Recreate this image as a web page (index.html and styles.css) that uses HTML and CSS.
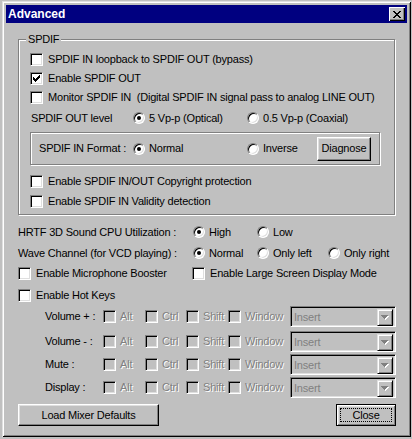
FILE: index.html
```html
<!DOCTYPE html>
<html>
<head>
<meta charset="utf-8">
<title>Advanced</title>
<link rel="stylesheet" href="styles.css">
</head>
<body>
<div class="window">
  <div class="titlebar">
    <span class="title">Advanced</span>
    <span class="tb-close"><svg width="8" height="7" viewBox="0 0 8 7" shape-rendering="crispEdges"><path d="M0 0h2v1h-2zM6 0h2v1h-2zM1 1h2v1h-2zM5 1h2v1h-2zM2 2h4v1h-4zM3 3h2v1h-2zM2 4h4v1h-4zM1 5h2v1h-2zM5 5h2v1h-2zM0 6h2v1h-2zM6 6h2v1h-2z" fill="#000"/></svg></span>
  </div>
  <div class="client">
    <div class="group">
      <div class="group-title">SPDIF</div>
      <div class="row r1"><span class="cb"></span><span>SPDIF IN loopback to SPDIF OUT (bypass)</span></div>
      <div class="row r2"><span class="cb"><svg width="7" height="7" viewBox="0 0 7 7" shape-rendering="crispEdges"><path d="M6 0h1v1h-1zM5 1h2v1h-2zM0 2h1v1h-1zM4 2h3v1h-3zM0 3h2v1h-2zM3 3h3v1h-3zM0 4h5v1h-5zM1 5h3v1h-3zM2 6h1v1h-1z" fill="#000"/></svg></span><span>Enable SPDIF OUT</span></div>
      <div class="row r3"><span class="cb"></span><span>Monitor SPDIF IN&nbsp; (Digital SPDIF IN signal pass to analog LINE OUT)</span></div>
      <div class="row r4">
        <span class="lbl lbl-level">SPDIF OUT level</span>
        <span class="opt w114"><span class="radio on"></span>5 Vp-p (Optical)</span>
        <span class="opt"><span class="radio"></span>0.5 Vp-p (Coaxial)</span>
      </div>
      <div class="inner">
        <span class="lbl lbl-format">SPDIF IN Format :</span>
        <span class="opt w114"><span class="radio on"></span>Normal</span>
        <span class="opt w70"><span class="radio"></span>Inverse</span>
        <span class="btn btn-diag">Diagnose</span>
      </div>
      <div class="row r5"><span class="cb"></span><span>Enable SPDIF IN/OUT Copyright protection</span></div>
      <div class="row r6"><span class="cb"></span><span>Enable SPDIF IN Validity detection</span></div>
    </div>

    <div class="row out hrtf">
      <span class="lbl lbl-out">HRTF 3D Sound CPU Utilization :</span>
      <span class="opt w64"><span class="radio on"></span>High</span>
      <span class="opt"><span class="radio"></span>Low</span>
    </div>
    <div class="row out wave">
      <span class="lbl lbl-out">Wave Channel (for VCD playing) :</span>
      <span class="opt w64"><span class="radio on"></span>Normal</span>
      <span class="opt w71"><span class="radio"></span>Only left</span>
      <span class="opt"><span class="radio"></span>Only right</span>
    </div>
    <div class="row out mic">
      <span class="opt w174"><span class="cb"></span>Enable Microphone Booster</span>
      <span class="opt"><span class="cb"></span>Enable Large Screen Display Mode</span>
    </div>
    <div class="row out hot">
      <span class="opt"><span class="cb"></span>Enable Hot Keys</span>
    </div>

    <div class="hk hk1">
      <span class="hk-lbl">Volume + :</span>
      <span class="hk-opt w42"><span class="cb dis"></span><span class="dtext">Alt</span></span>
      <span class="hk-opt w41"><span class="cb dis"></span><span class="dtext">Ctrl</span></span>
      <span class="hk-opt w42"><span class="cb dis"></span><span class="dtext">Shift</span></span>
      <span class="hk-opt w62"><span class="cb dis"></span><span class="dtext">Window</span></span>
      <span class="combo"><span class="combo-text">Insert</span><span class="combo-btn"><svg width="8" height="5" viewBox="0 0 8 5" shape-rendering="crispEdges"><path d="M1 1h7v1h-7zM2 2h5v1h-5zM3 3h3v1h-3zM4 4h1v1h-1z" fill="#fff"/><path d="M0 0h7v1h-7zM1 1h5v1h-5zM2 2h3v1h-3zM3 3h1v1h-1z" fill="#808080"/></svg></span></span>
    </div>
    <div class="hk hk2">
      <span class="hk-lbl">Volume - :</span>
      <span class="hk-opt w42"><span class="cb dis"></span><span class="dtext">Alt</span></span>
      <span class="hk-opt w41"><span class="cb dis"></span><span class="dtext">Ctrl</span></span>
      <span class="hk-opt w42"><span class="cb dis"></span><span class="dtext">Shift</span></span>
      <span class="hk-opt w62"><span class="cb dis"></span><span class="dtext">Window</span></span>
      <span class="combo"><span class="combo-text">Insert</span><span class="combo-btn"><svg width="8" height="5" viewBox="0 0 8 5" shape-rendering="crispEdges"><path d="M1 1h7v1h-7zM2 2h5v1h-5zM3 3h3v1h-3zM4 4h1v1h-1z" fill="#fff"/><path d="M0 0h7v1h-7zM1 1h5v1h-5zM2 2h3v1h-3zM3 3h1v1h-1z" fill="#808080"/></svg></span></span>
    </div>
    <div class="hk hk3">
      <span class="hk-lbl">Mute :</span>
      <span class="hk-opt w42"><span class="cb dis"></span><span class="dtext">Alt</span></span>
      <span class="hk-opt w41"><span class="cb dis"></span><span class="dtext">Ctrl</span></span>
      <span class="hk-opt w42"><span class="cb dis"></span><span class="dtext">Shift</span></span>
      <span class="hk-opt w62"><span class="cb dis"></span><span class="dtext">Window</span></span>
      <span class="combo"><span class="combo-text">Insert</span><span class="combo-btn"><svg width="8" height="5" viewBox="0 0 8 5" shape-rendering="crispEdges"><path d="M1 1h7v1h-7zM2 2h5v1h-5zM3 3h3v1h-3zM4 4h1v1h-1z" fill="#fff"/><path d="M0 0h7v1h-7zM1 1h5v1h-5zM2 2h3v1h-3zM3 3h1v1h-1z" fill="#808080"/></svg></span></span>
    </div>
    <div class="hk hk4">
      <span class="hk-lbl">Display :</span>
      <span class="hk-opt w42"><span class="cb dis"></span><span class="dtext">Alt</span></span>
      <span class="hk-opt w41"><span class="cb dis"></span><span class="dtext">Ctrl</span></span>
      <span class="hk-opt w42"><span class="cb dis"></span><span class="dtext">Shift</span></span>
      <span class="hk-opt w62"><span class="cb dis"></span><span class="dtext">Window</span></span>
      <span class="combo"><span class="combo-text">Insert</span><span class="combo-btn"><svg width="8" height="5" viewBox="0 0 8 5" shape-rendering="crispEdges"><path d="M1 1h7v1h-7zM2 2h5v1h-5zM3 3h3v1h-3zM4 4h1v1h-1z" fill="#fff"/><path d="M0 0h7v1h-7zM1 1h5v1h-5zM2 2h3v1h-3zM3 3h1v1h-1z" fill="#808080"/></svg></span></span>
    </div>

    <div class="buttons">
      <span class="btn btn-load">Load Mixer Defaults</span>
      <span class="btn btn-close"><span class="focus">Close</span></span>
    </div>
  </div>
</div>
</body>
</html>
```

FILE: styles.css
```css
html, body {
  margin: 0;
  padding: 0;
  background: #c0c0c0;
}
body {
  font-family: "Liberation Sans", Arial, sans-serif;
  font-size: 11px;
  letter-spacing: -0.2px;
  color: #000;
  line-height: 13px;
}
.window {
  margin: 1px 0 0 2px;
  width: 409px;
  height: 436px;
  box-sizing: border-box;
  padding: 4px;
  background: #c0c0c0;
  box-shadow: inset 1px 1px 0 #dfdfdf, inset -1px -1px 0 #000, inset 2px 2px 0 #fff, inset -2px -2px 0 #808080;
}
.titlebar {
  height: 18px;
  background: #000080;
  display: flex;
  align-items: center;
  justify-content: space-between;
  padding: 0 2px;
}
.title {
  color: #fff;
  font-weight: bold;
  font-size: 12px;
  letter-spacing: 0;
}
.tb-close {
  width: 16px;
  height: 14px;
  box-sizing: border-box;
  background: #c0c0c0;
  box-shadow: inset 1px 1px 0 #fff, inset -1px -1px 0 #000, inset -2px -2px 0 #808080;
  display: flex;
  align-items: center;
  justify-content: center;
  padding-right: 1px;
}
.tb-close svg { display: block; }

.client {
  display: flex;
  flex-direction: column;
}

.group {
  margin: 16px 0 0 12px;
  width: 377px;
  box-sizing: border-box;
  border: 1px solid #808080;
  box-shadow: 1px 1px 0 #fff, inset 1px 1px 0 #fff;
  padding: 0 0 3px 11px;
  display: flex;
  flex-direction: column;
}
.group-title {
  align-self: flex-start;
  margin: -7px 0 0 -4px;
  padding: 0 2px;
  background: #c0c0c0;
  line-height: 13px;
}

.row {
  display: flex;
  align-items: center;
  height: 20px;
  white-space: nowrap;
}
.r1 { margin-top: 3px; }
.r2 { height: 19px; }
.r3 { height: 19px; }
.r4 { height: 22px; }
.r5 { margin-top: 6px; }

.cb {
  width: 13px;
  height: 13px;
  box-sizing: border-box;
  background: #fff;
  border: 1px solid;
  border-color: #808080 #fff #fff #808080;
  box-shadow: inset 1px 1px 0 #000, inset -1px -1px 0 #dfdfdf;
  display: flex;
  align-items: center;
  justify-content: center;
  flex: none;
  margin-right: 5px;
}
.cb svg { display: block; }
.cb.dis {
  background: #c0c0c0;
  margin-right: 4px;
}

.radio {
  width: 12px;
  height: 12px;
  box-sizing: border-box;
  border-radius: 50%;
  background: #fff;
  border: 1px solid;
  border-color: #808080 #fff #fff #808080;
  box-shadow: inset 1px 1px 0 #000, inset -1px -1px 0 #dfdfdf;
  flex: none;
  margin-right: 4px;
  display: flex;
  align-items: center;
  justify-content: center;
}
.radio.on::after {
  content: "";
  width: 4px;
  height: 4px;
  border-radius: 50%;
  background: #000;
}

.lbl { flex: none; }
.lbl-level { width: 102px; margin-left: 1px; }
.lbl-format { width: 94px; margin-left: 8px; }
.lbl-out { width: 175px; }

.opt {
  display: flex;
  align-items: center;
  flex: none;
}
.w114 { width: 114px; }
.w70 { width: 70px; }
.w64 { width: 64px; }
.w71 { width: 71px; }
.w174 { width: 174px; }
.w42 { width: 42px; }
.w41 { width: 41px; }
.w62 { width: 62px; }

.inner {
  margin-top: 3px;
  width: 350px;
  height: 33px;
  box-sizing: border-box;
  border: 1px solid #808080;
  box-shadow: 1px 1px 0 #fff, inset 1px 1px 0 #fff;
  display: flex;
  align-items: center;
  white-space: nowrap;
}

.btn {
  box-sizing: border-box;
  background: #c0c0c0;
  border: 1px solid;
  border-color: #fff #000 #000 #fff;
  box-shadow: inset -1px -1px 0 #808080, inset 1px 1px 0 #dfdfdf;
  display: flex;
  align-items: center;
  justify-content: center;
  white-space: nowrap;
  flex: none;
}
.btn-diag {
  width: 54px;
  height: 24px;
}

.out { margin-left: 12px; }
.hrtf { margin-top: 7px; }
.wave { margin-top: 1px; }
.mic { margin-top: 0; }
.hot { margin-top: 2px; }

.hk {
  display: flex;
  align-items: center;
  height: 21px;
  margin-left: 39px;
  white-space: nowrap;
}
.hk1 { margin-top: 1px; }
.hk2 { margin-top: 4px; }
.hk3 { margin-top: 2px; }
.hk4 { margin-top: 2px; }
.hk-lbl { width: 58px; flex: none; }
.hk-opt {
  display: flex;
  align-items: center;
  flex: none;
}
.dtext {
  color: #808080;
  text-shadow: 1px 1px 0 #fff;
}

.combo {
  width: 106px;
  height: 21px;
  box-sizing: border-box;
  border: 1px solid;
  border-color: #808080 #fff #fff #808080;
  box-shadow: inset 1px 1px 0 #000, inset -1px -1px 0 #dfdfdf;
  background: #c0c0c0;
  display: flex;
  padding: 2px;
  flex: none;
}
.combo-text {
  flex: 1;
  color: #808080;
  padding-left: 1px;
  line-height: 16px;
}
.combo-btn {
  width: 16px;
  height: 17px;
  box-sizing: border-box;
  background: #c0c0c0;
  border: 1px solid;
  border-color: #dfdfdf #000 #000 #dfdfdf;
  box-shadow: inset 1px 1px 0 #fff, inset -1px -1px 0 #808080;
  display: flex;
  align-items: center;
  justify-content: center;
}
.combo-btn svg { display: block; }

.buttons {
  display: flex;
  justify-content: space-between;
  margin: 6px 11px 0 12px;
}
.btn-load {
  width: 141px;
  height: 22px;
}
.btn-close {
  width: 60px;
  height: 22px;
  border: 1px solid #000;
  box-shadow: inset 1px 1px 0 #fff, inset -1px -1px 0 #808080, inset 2px 2px 0 #dfdfdf;
  padding: 3px;
}
.focus {
  flex: 1;
  align-self: stretch;
  border: 1px dotted #000;
  display: flex;
  align-items: center;
  justify-content: center;
}
```
